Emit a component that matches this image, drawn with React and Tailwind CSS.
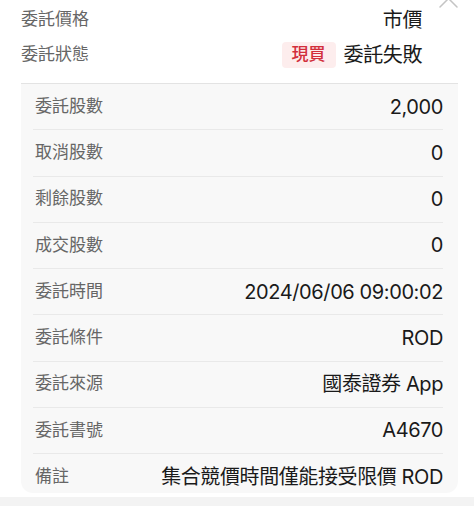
const rows = [
  { label: '委託股數', value: '2,000' },
  { label: '取消股數', value: '0' },
  { label: '剩餘股數', value: '0' },
  { label: '成交股數', value: '0' },
  { label: '委託時間', value: '2024/06/06 09:00:02' },
  { label: '委託條件', value: 'ROD' },
  { label: '委託來源', value: '國泰證券 App' },
  { label: '委託書號', value: 'A4670' },
  { label: '備註', value: '集合競價時間僅能接受限價 ROD' },
];

export default function App() {
  return (
    <div className="relative w-[474px] h-[506px] bg-white overflow-hidden font-['Inter','Noto_Sans_CJK_TC',sans-serif]">
      {/* close button, mostly scrolled off the top */}
      <svg className="absolute left-[438px] top-[-12px]" width="21" height="21" viewBox="0 0 21 21">
        <path d="M2 2 L19 19 M19 2 L2 19" stroke="#c4c4c4" strokeWidth="1.5" strokeLinecap="round" />
      </svg>

      <div className="pl-[21px] pr-[52px] pt-[2px]">
        <div className="flex h-[36px] items-center justify-between">
          <span className="text-[17px] text-[#666]">委託價格</span>
          <span className="text-[20px] tracking-[-0.4px] text-[#1a1a1a]">市價</span>
        </div>
        <div className="flex h-[34px] items-center justify-between">
          <span className="text-[17px] text-[#666]">委託狀態</span>
          <div className="flex items-center gap-[8px]">
            <span className="flex h-[26px] items-center rounded-[4px] bg-[#fdeded] px-[10px] text-[17px] font-medium text-[#d22f3c]">現買</span>
            <span className="text-[20px] tracking-[-0.4px] text-[#1a1a1a]">委託失敗</span>
          </div>
        </div>
      </div>

      <div className="ml-[21px] mr-[16px] mt-[11px] h-[410px] overflow-hidden rounded-b-[12px] border-t border-[#e3e3e3] bg-[#f8f8f8]">
        {rows.map((row, i) => (
          <div
            key={row.label}
            className={`ml-[12px] mr-[15px] flex h-[46.25px] items-center justify-between ${i < rows.length - 1 ? 'border-b border-[#e9e9e9]' : ''}`}
          >
            <span className="pl-[2px] text-[17px] text-[#666]">{row.label}</span>
            <span className="text-[20px] tracking-[-0.4px] text-[#1a1a1a]">{row.value}</span>
          </div>
        ))}
      </div>

      <div className="mt-[4px] h-[9px] bg-[#f3f3f3]" />
    </div>
  );
}
